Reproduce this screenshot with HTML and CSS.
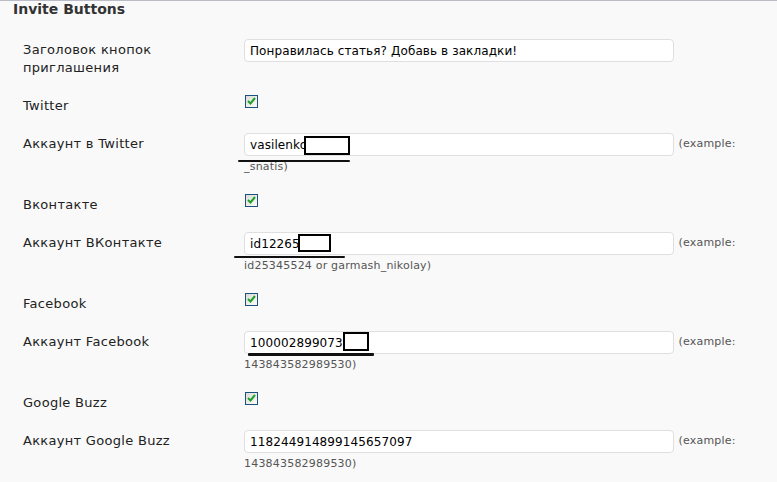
FILE: index.html
```html
<!DOCTYPE html>
<html lang="ru">
<head>
    <meta charset="UTF-8">
    <title>Invite Buttons</title>
    <link rel="stylesheet" href="styles.css">
</head>
<body>
<div class="panel">
    <h3>Invite Buttons</h3>

    <div class="form-table">
        <div class="row row-text">
            <div class="label">Заголовок кнопок приглашения</div>
            <div class="field">
                <span class="input-wrap"><input type="text" class="text-input" value="Понравилась статья? Добавь в закладки!"></span>
            </div>
        </div>

        <div class="row row-check">
            <div class="label">Twitter</div>
            <div class="field"><span class="checkbox"><svg width="9" height="8" viewBox="0 0 9 8"><path d="M1 4 L3.5 6.5 L8 1" fill="none" stroke="#1fa02c" stroke-width="2"/></svg></span></div>
        </div>

        <div class="row row-input">
            <div class="label">Аккаунт в Twitter</div>
            <div class="field">
                <span class="input-wrap"><input type="text" class="text-input" value="vasilenko"><span class="hide-box tw-box"></span><span class="hide-line tw-line"></span></span>
                <span class="desc">(example: _snatis)</span>
            </div>
        </div>

        <div class="row row-check">
            <div class="label">Вконтакте</div>
            <div class="field"><span class="checkbox"><svg width="9" height="8" viewBox="0 0 9 8"><path d="M1 4 L3.5 6.5 L8 1" fill="none" stroke="#1fa02c" stroke-width="2"/></svg></span></div>
        </div>

        <div class="row row-input">
            <div class="label">Аккаунт ВКонтакте</div>
            <div class="field">
                <span class="input-wrap"><input type="text" class="text-input" value="id12265"><span class="hide-box vk-box"></span><span class="hide-line vk-line"></span></span>
                <span class="desc">(example: id25345524 or garmash_nikolay)</span>
            </div>
        </div>

        <div class="row row-check">
            <div class="label">Facebook</div>
            <div class="field"><span class="checkbox"><svg width="9" height="8" viewBox="0 0 9 8"><path d="M1 4 L3.5 6.5 L8 1" fill="none" stroke="#1fa02c" stroke-width="2"/></svg></span></div>
        </div>

        <div class="row row-input">
            <div class="label">Аккаунт Facebook</div>
            <div class="field">
                <span class="input-wrap"><input type="text" class="text-input" value="100002899073"><span class="hide-box fb-box"></span><span class="hide-line fb-line"></span></span>
                <span class="desc">(example: 143843582989530)</span>
            </div>
        </div>

        <div class="row row-check">
            <div class="label">Google Buzz</div>
            <div class="field"><span class="checkbox"><svg width="9" height="8" viewBox="0 0 9 8"><path d="M1 4 L3.5 6.5 L8 1" fill="none" stroke="#1fa02c" stroke-width="2"/></svg></span></div>
        </div>

        <div class="row row-input">
            <div class="label">Аккаунт Google Buzz</div>
            <div class="field">
                <span class="input-wrap"><input type="text" class="text-input" value="118244914899145657097"></span>
                <span class="desc">(example: 143843582989530)</span>
            </div>
        </div>
    </div>
</div>
</body>
</html>
```

FILE: styles.css
```css
html, body {
    margin: 0;
    padding: 0;
    background-color: #f9f9f9;
}

body {
    font-family: "DejaVu Sans", Verdana, sans-serif;
    color: #333;
    width: 777px;
    height: 482px;
    overflow: hidden;
}

.panel {
    border-top: 1px solid #b9bcc6;
}

.panel h3 {
    margin: 1px 0 0 13px;
    font-size: 14px;
    line-height: 14px;
    font-weight: bold;
    color: #333;
}

.form-table {
    margin-top: 15px;
    padding-left: 23px;
}

.row {
    display: flex;
    align-items: flex-start;
    padding-top: 8px;
}

.row-text {
    height: 48px;
}

.row-check {
    height: 30px;
}

.row-input {
    height: 53px;
}

.label {
    width: 190px;
    margin-right: 31px;
    padding-top: 2px;
    font-size: 13px;
    letter-spacing: 0.3px;
    line-height: 18px;
    color: #222;
}

.field {
    flex: 1;
    padding-right: 10px;
    font-size: 11px;
    line-height: 22px;
}

.input-wrap {
    position: relative;
    display: inline-block;
    vertical-align: top;
}

.text-input {
    display: block;
    box-sizing: border-box;
    width: 430px;
    height: 23px;
    margin: 0;
    padding: 0 5px;
    border: 1px solid #dfdfdf;
    border-radius: 4px;
    background: #fff;
    font-family: "DejaVu Sans", Verdana, sans-serif;
    font-size: 12px;
    letter-spacing: 0.1px;
    color: #000;
    outline: none;
}

.desc {
    color: #555;
    margin-left: 1px;
    letter-spacing: 0.2px;
}

.checkbox {
    display: block;
    box-sizing: border-box;
    width: 13px;
    height: 13px;
    margin-left: 1px;
    border: 1px solid #1c5180;
    background: linear-gradient(135deg, #dcdcd6, #fbfbf8);
    position: relative;
}

.checkbox svg {
    position: absolute;
    left: 1px;
    top: 1px;
}

/* закрашенные куски на скриншоте */
.hide-box {
    position: absolute;
    box-sizing: border-box;
    border: 2px solid #000;
    background: #fff;
}

.hide-line {
    position: absolute;
    height: 2px;
    background: #111;
    border-radius: 1px;
}

.tw-box { left: 60px; top: 3px; width: 46px; height: 19px; }
.tw-line { left: -6px; top: 27px; width: 112px; }

.vk-box { left: 54px; top: 2px; width: 33px; height: 18px; }
.vk-line { left: -10px; top: 24px; width: 111px; }

.fb-box { left: 99px; top: 1px; width: 26px; height: 19px; }
.fb-line { left: 4px; top: 22px; width: 126px; height: 3px; }
```
